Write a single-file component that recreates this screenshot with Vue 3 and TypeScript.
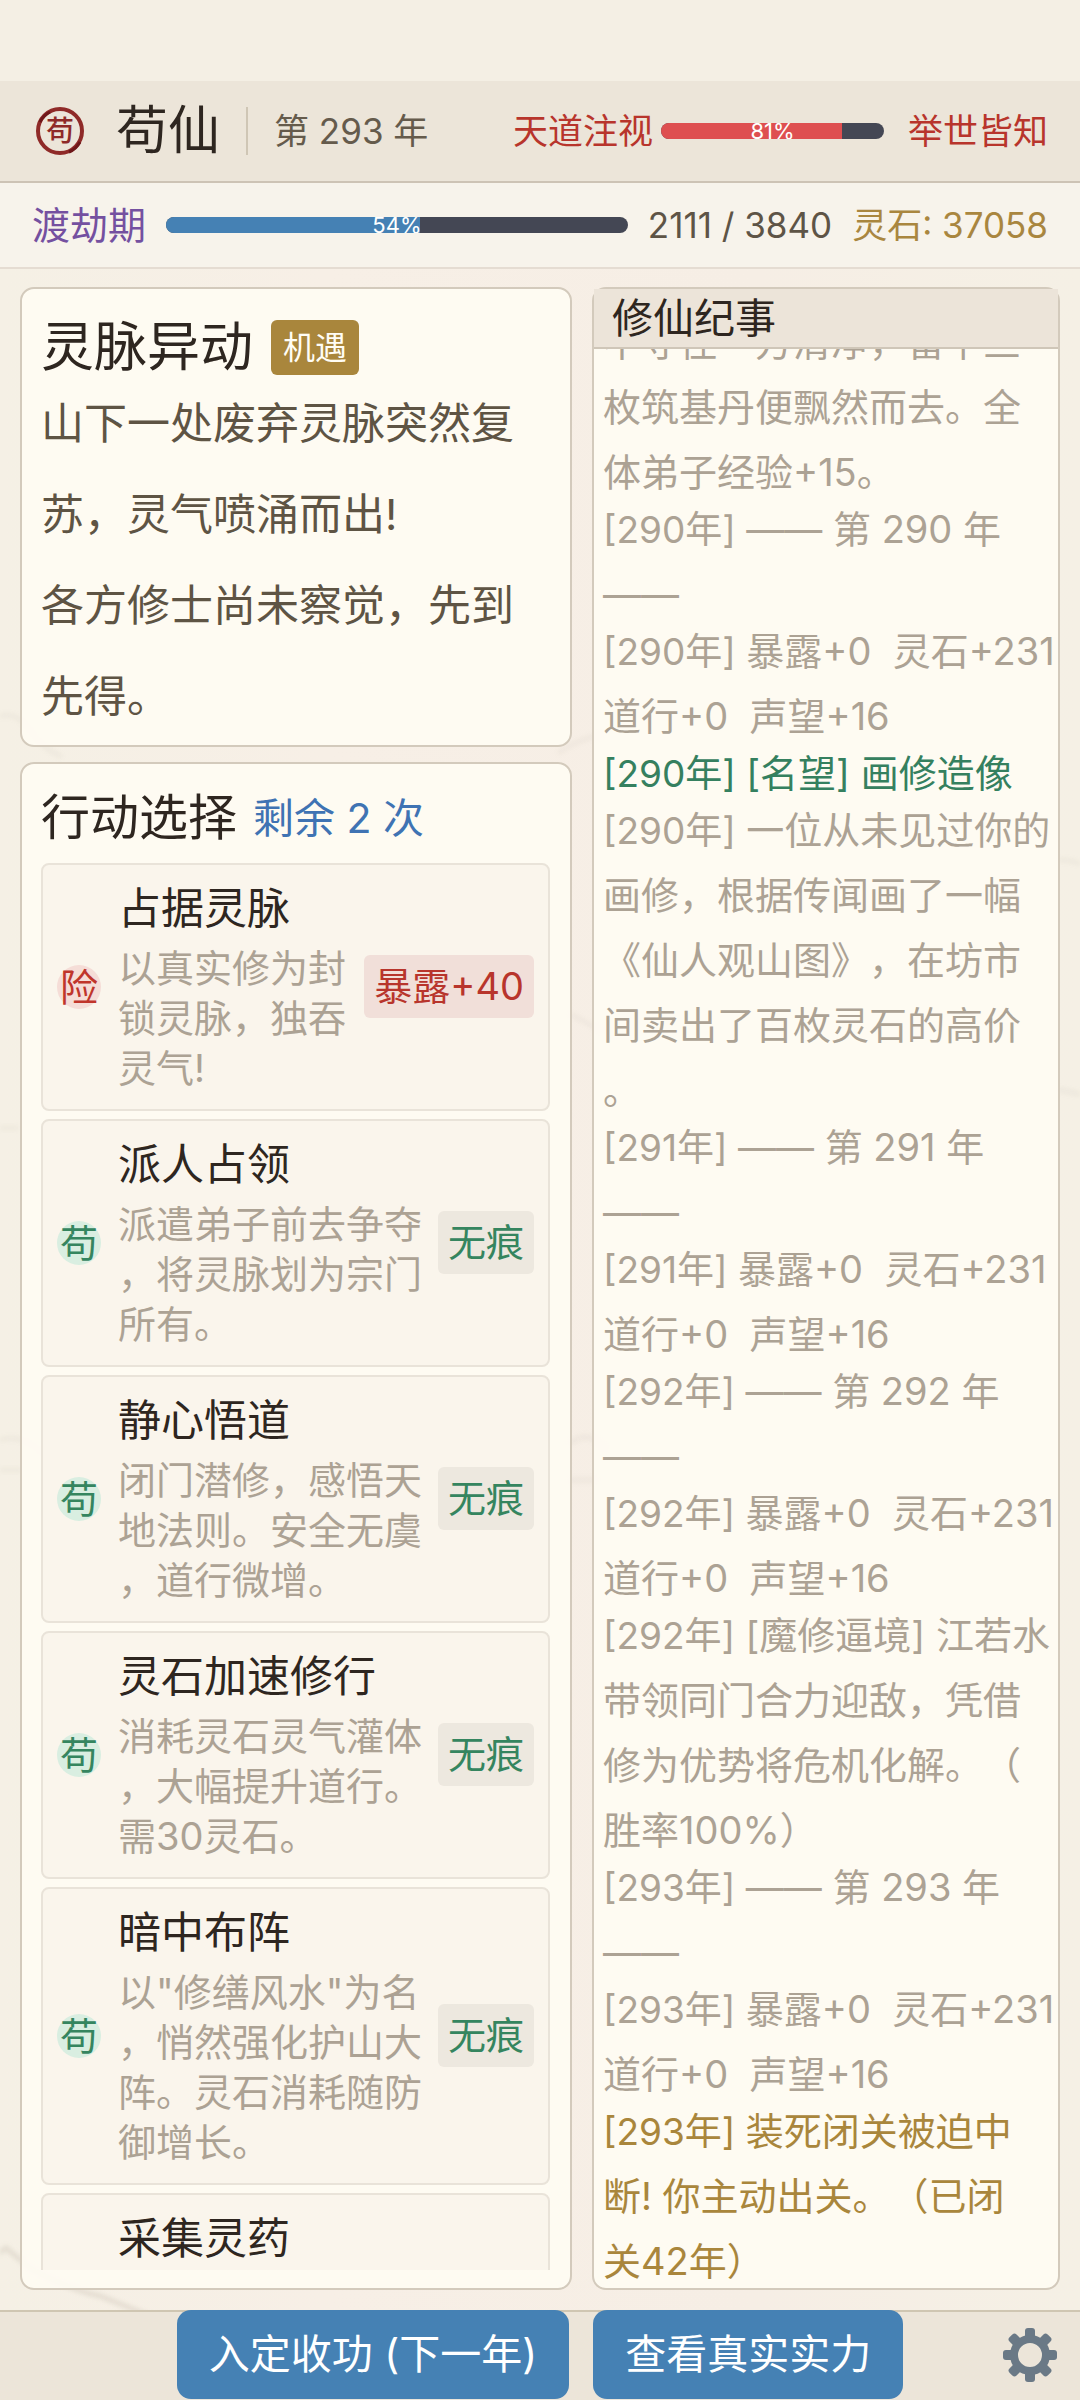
<script setup lang="ts">
interface Action {
  name: string
  desc?: string
  mark?: string
  cost?: string
  risky?: boolean
}

interface LogEntry {
  year?: number
  text: string
  tone?: 'good' | 'warn'
}

const exposure = 81
const progress = 54

const eventLines = ['山下一处废弃灵脉突然复苏，灵气喷涌而出!', '各方修士尚未察觉，先到先得。']

const actions: Action[] = [
  { name: '占据灵脉', desc: '以真实修为封锁灵脉，独吞灵气!', mark: '险', cost: '暴露+40', risky: true },
  { name: '派人占领', desc: '派遣弟子前去争夺，将灵脉划为宗门所有。', mark: '苟', cost: '无痕' },
  { name: '静心悟道', desc: '闭门潜修，感悟天地法则。安全无虞，道行微增。', mark: '苟', cost: '无痕' },
  { name: '灵石加速修行', desc: '消耗灵石灵气灌体，大幅提升道行。需30灵石。', mark: '苟', cost: '无痕' },
  { name: '暗中布阵', desc: '以"修缮风水"为名，悄然强化护山大阵。灵石消耗随防御增长。', mark: '苟', cost: '无痕' },
  { name: '采集灵药' },
]

const log: LogEntry[] = [
  { text: '不守住一方清净，留下三\n枚筑基丹便飘然而去。全\n体弟子经验+15。' },
  { year: 290, text: '—— 第 290 年\n——' },
  { year: 290, text: '暴露+0  灵石+231\n道行+0  声望+16' },
  { year: 290, text: '[名望] 画修造像', tone: 'good' },
  { year: 290, text: '一位从未见过你的\n画修，根据传闻画了一幅\n《仙人观山图》，在坊市\n间卖出了百枚灵石的高价\n。' },
  { year: 291, text: '—— 第 291 年\n——' },
  { year: 291, text: '暴露+0  灵石+231\n道行+0  声望+16' },
  { year: 292, text: '—— 第 292 年\n——' },
  { year: 292, text: '暴露+0  灵石+231\n道行+0  声望+16' },
  { year: 292, text: '[魔修逼境] 江若水\n带领同门合力迎敌，凭借\n修为优势将危机化解。（\n胜率100%）' },
  { year: 293, text: '—— 第 293 年\n——' },
  { year: 293, text: '暴露+0  灵石+231\n道行+0  声望+16' },
  { year: 293, text: '装死闭关被迫中\n断! 你主动出关。（已闭\n关42年）', tone: 'warn' },
]

const teeth = [0, 45, 90, 135, 180, 225, 270, 315]
</script>

<template>
  <div class="page">
    <svg class="scenery" viewBox="0 0 1080 2400" preserveAspectRatio="none" aria-hidden="true">
      <g fill="none" stroke="#8d8272" stroke-linecap="round">
        <path d="M-5 2256 L6 2248 L30 2268 Q70 2290 100 2296 L150 2316" stroke-width="5" opacity=".16" />
        <path d="M0 716 Q18 712 30 730 T60 756 M560 752 Q576 740 600 735" stroke-width="5" opacity=".06" />
        <path d="M0 1128 H16 M0 1440 Q30 1430 60 1474 M0 1470 H20 M572 1015 L600 1030 M1060 860 Q1072 860 1080 864" stroke-width="5" opacity=".06" />
        <path d="M572 1442 Q590 1430 604 1448 M1060 1090 L1080 1094 M572 1480 H594" stroke-width="6" opacity=".06" />
      </g>
    </svg>

    <header class="topbar">
      <svg class="seal" viewBox="0 0 52 52" role="img" aria-label="苟仙">
        <circle cx="26" cy="26" r="22" fill="none" stroke="#8f2a28" stroke-width="4" />
        <path d="M6 17a22 22 0 0 1 10-10M46 37a22 22 0 0 1-11 10" fill="none" stroke="#6e1719" stroke-width="3" />
        <text x="26" y="36" text-anchor="middle" class="seal-text">苟</text>
      </svg>
      <h1>苟仙</h1>
      <span class="divider"></span>
      <span class="year">第 293 年</span>
      <div class="watch">
        <span>天道注视</span>
        <div class="bar bar-red" role="progressbar" :aria-valuenow="exposure" aria-label="天道注视">
          <div class="fill" :style="{ width: exposure + '%' }"></div>
          <span class="pct">{{ exposure }}%</span>
        </div>
        <span class="fame">举世皆知</span>
      </div>
    </header>

    <section class="stats">
      <span class="realm">渡劫期</span>
      <div class="bar bar-blue" role="progressbar" :aria-valuenow="progress" aria-label="修为">
        <div class="fill" :style="{ width: '55%' }"></div>
        <span class="pct">{{ progress }}%</span>
      </div>
      <span class="points">2111 / 3840</span>
      <span class="stones">灵石: 37058</span>
    </section>

    <main>
      <div class="left">
        <section class="card event">
          <div class="event-head">
            <h2>灵脉异动</h2>
            <span class="kind">机遇</span>
          </div>
          <p v-for="line in eventLines" :key="line">{{ line }}</p>
        </section>

        <section class="card choices">
          <div class="choices-head">
            <h2>行动选择</h2>
            <span>剩余 2 次</span>
          </div>
          <div class="list">
            <button v-for="a in actions" :key="a.name" type="button" class="action" :class="{ risky: a.risky }">
              <span v-if="a.mark" class="mark">{{ a.mark }}</span>
              <span v-else class="mark-space"></span>
              <span class="body">
                <span class="name">{{ a.name }}</span>
                <span v-if="a.desc" class="desc">{{ a.desc }}</span>
              </span>
              <span v-if="a.cost" class="cost">{{ a.cost }}</span>
            </button>
          </div>
        </section>
      </div>

      <section class="card chronicle">
        <h2>修仙纪事</h2>
        <div class="log">
          <p v-for="(e, i) in log" :key="i" :class="e.tone"><span v-if="e.year" class="stamp">[{{ e.year }}年] </span>{{ e.text }}</p>
        </div>
      </section>
    </main>

    <footer>
      <div class="buttons">
        <button type="button" class="primary">入定收功 (下一年)</button>
        <button type="button" class="primary">查看真实实力</button>
      </div>
      <button type="button" class="settings" aria-label="设置">
        <svg viewBox="0 0 54 54">
          <g fill="#6a7986">
            <rect v-for="t in teeth" :key="t" x="22" y="0" width="10" height="14" rx="3" :transform="`rotate(${t} 27 27)`" />
          </g>
          <circle cx="27" cy="27" r="16" fill="none" stroke="#6a7986" stroke-width="8" />
        </svg>
      </button>
    </footer>
  </div>
</template>

<style>
body {
  margin: 0;
  background: #f5f0e5;
}
</style>

<style scoped>
.page {
  position: relative;
  display: flex;
  flex-direction: column;
  box-sizing: border-box;
  height: 100vh;
  padding-top: 81px;
  overflow: hidden;
  background: linear-gradient(90deg, #f5f0e5, #f7efe6 30%, #f6eee5 70%, #f5f0e5);
  color: #2e2620;
  font-family: Inter, 'Noto Sans CJK SC', sans-serif;
  text-spacing-trim: space-all;
}
.page::before {
  content: '';
  position: absolute;
  inset: 0 0 auto;
  height: 81px;
  background: #f4efe4;
}
.scenery {
  position: absolute;
  inset: 0;
  width: 100%;
  height: 100%;
  filter: blur(2px);
}
.topbar,
.stats,
main,
footer {
  position: relative;
}
h1,
h2,
p {
  margin: 0;
  font-weight: 400;
}
button {
  border: 0;
  padding: 0;
  font: inherit;
  color: inherit;
  cursor: pointer;
}

.topbar {
  display: flex;
  align-items: center;
  gap: 26px;
  height: 100px;
  padding: 0 32px 0 34px;
  background: #ece5d9;
  border-bottom: 2px solid #cdc3b5;
  font-size: 35px;
  line-height: 40px;
  white-space: nowrap;
}
.seal {
  width: 52px;
  height: 52px;
  margin-right: 4px;
}
.seal-text {
  font: 500 28px 'Noto Sans CJK SC', sans-serif;
  fill: #8f2a28;
}
h1 {
  font-size: 52px;
  line-height: 60px;
}
.divider {
  width: 2px;
  height: 48px;
  background: #cfc6b5;
}
.year {
  color: #655b4c;
}
.watch {
  display: flex;
  align-items: center;
  gap: 8px;
  margin-left: auto;
  color: #b8352c;
}
.watch .bar {
  width: 223px;
}
.fame {
  margin-left: 16px;
}

.bar {
  position: relative;
  height: 16px;
  border-radius: 8px;
  background: #444754;
  overflow: hidden;
}
.fill {
  height: 100%;
}
.bar-red .fill {
  background: #de4f50;
}
.bar-blue .fill {
  background: #4581b4;
}
.pct {
  position: absolute;
  inset: 0;
  color: #fff;
  font-size: 22px;
  line-height: 16px;
  text-align: center;
}

.stats {
  display: flex;
  align-items: center;
  gap: 20px;
  height: 84px;
  padding: 0 32px;
  background: #f7f3eb;
  border-bottom: 2px solid #e5dcd2;
  font-size: 35px;
  line-height: 40px;
  white-space: nowrap;
}
.stats .bar {
  flex: 1;
}
.realm {
  color: #7450a0;
  font-size: 38px;
}
.points {
  color: #5e5446;
}
.stones {
  color: #a9863f;
}

main {
  flex: 1;
  min-height: 0;
  display: grid;
  grid-template-columns: 552fr 468fr;
  grid-template-rows: minmax(0, 1fr);
  gap: 20px;
  padding: 18px 20px 20px;
}
.left {
  display: flex;
  flex-direction: column;
  gap: 15px;
  min-height: 0;
}
.card {
  border: 2px solid #d3cabc;
  border-radius: 14px;
  background: rgba(254, 251, 242, 0.95);
}
.event {
  padding: 27px 18px 3px 19px;
}
.event-head {
  display: flex;
  align-items: center;
  gap: 18px;
  height: 62px;
}
.event h2 {
  font-size: 53px;
  line-height: 62px;
}
.kind {
  padding: 0 12px;
  border-radius: 6px;
  background: #a9863c;
  color: #fffdf5;
  font-size: 32px;
  line-height: 55px;
}
.event p {
  color: #5e5444;
  font-size: 43px;
  line-height: 91px;
}

.choices {
  flex: 1;
  min-height: 0;
  display: flex;
  flex-direction: column;
  gap: 15px;
  padding: 24px 20px 18px 19px;
}
.choices-head {
  display: flex;
  align-items: center;
  gap: 16px;
  line-height: 60px;
}
.choices h2 {
  font-size: 49px;
}
.choices-head span {
  color: #3f73b3;
  font-size: 41px;
}
.list {
  flex: 1;
  min-height: 0;
  display: flex;
  flex-direction: column;
  gap: 8px;
  overflow: hidden;
}
.action {
  flex: none;
  display: flex;
  align-items: center;
  padding: 18px 14px 16px;
  border: 2px solid #e9e3d9;
  border-radius: 8px;
  background: #faf5ec;
  text-align: left;
  font-size: 38px;
}
.mark {
  margin-bottom: 2px;
  border-radius: 50%;
  background: #d9eee1;
  color: #35855f;
  line-height: 44px;
  text-align: center;
}
.mark,
.mark-space {
  width: 44px;
  margin-right: 17px;
}
.body {
  flex: 1;
  display: flex;
  flex-direction: column;
  gap: 10px;
  min-height: 210px;
}
.name {
  font-size: 43px;
  line-height: 50px;
}
.desc {
  color: #aca294;
  line-height: 50px;
  line-break: anywhere;
}
.cost {
  margin: 0 0 4px 14px;
  padding: 0 10px;
  border-radius: 6px;
  background: #ede8df;
  color: #35855f;
  line-height: 63px;
  white-space: nowrap;
}
.risky .mark {
  background: #f5ddd7;
  color: #c0352b;
}
.risky .cost {
  background: #f1dfd9;
  color: #b8352c;
}

.chronicle {
  display: flex;
  flex-direction: column;
  min-height: 0;
  min-width: 0;
}
.chronicle h2 {
  padding-left: 18px;
  background: #ece4d9;
  border-bottom: 2px solid #cfc6b8;
  font-size: 41px;
  line-height: 58px;
}
.log {
  flex: 1;
  min-height: 0;
  display: flex;
  flex-direction: column;
  justify-content: flex-end;
  padding: 0 0 2px 9px;
  overflow: hidden;
}
.log p {
  flex: none;
  margin-bottom: -8px;
  color: #aca294;
  font-size: 38px;
  line-height: 65px;
  white-space: pre;
}
.stamp {
  font-size: 37px;
}
.log .good {
  color: #35805f;
}
.log .warn {
  color: #a9863c;
}

footer {
  display: grid;
  grid-template-columns: 1fr auto 1fr;
  align-items: center;
  padding-bottom: 1px;
  background: linear-gradient(#cfc6b2 2px, #ece5d9 2px);
}
.buttons {
  grid-column: 2;
  display: flex;
  gap: 24px;
}
.primary {
  padding: 0 32px;
  border-radius: 14px;
  background: #4581b4;
  color: #fff;
  font-size: 41px;
  line-height: 89px;
  white-space: nowrap;
}
.settings {
  justify-self: end;
  margin-right: 23px;
  width: 54px;
  height: 54px;
  background: none;
}
.settings svg {
  display: block;
}
</style>
